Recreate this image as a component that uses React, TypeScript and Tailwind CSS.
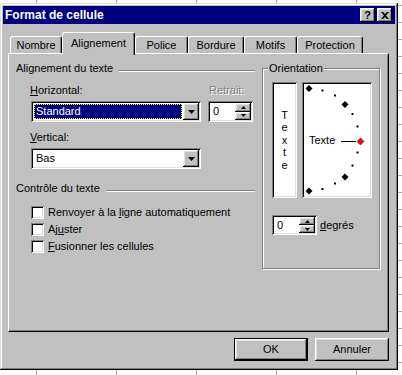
import React from 'react';

const font = "font-['Liberation_Sans',Arial,sans-serif] text-[11px] leading-[13px] text-black";
const raised = 'shadow-[inset_-1px_-1px_0_#000,inset_1px_1px_0_#fff,inset_-2px_-2px_0_#808080,inset_2px_2px_0_#dfdfdf]';
const sunken = 'shadow-[inset_1px_1px_0_#808080,inset_-1px_-1px_0_#fff,inset_2px_2px_0_#000,inset_-2px_-2px_0_#dfdfdf]';
const frame = 'shadow-[inset_-1px_-1px_0_#000,inset_1px_1px_0_#dfdfdf,inset_-2px_-2px_0_#808080,inset_2px_2px_0_#fff]';

// Excel sheet grid behind the dialog
const Sheet = () => {
  const rows = Array.from({ length: 23 });
  const cols = [0, 1, 2, 3, 4, 5];
  return (
    <div className="flex flex-col">
      {rows.map((_, r) => (
        <div key={r} className={`flex shrink-0 ${r === 0 ? 'h-[6px]' : 'h-[17px]'}`}>
          {cols.map((c) => (
            <div
              key={c}
              className={`shrink-0 border-r border-b border-[#a8a8a8] ${c === 0 ? 'w-[37px]' : 'w-[80px]'}`}
            />
          ))}
        </div>
      ))}
    </div>
  );
};

const DownArrow = () => (
  <svg width="7" height="4" viewBox="0 0 7 4">
    <path d="M0 0h7L3.5 4z" fill="#000" />
  </svg>
);

const SpinArrow = ({ up }: { up?: boolean }) => (
  <svg width="5" height="3" viewBox="0 0 5 3">
    <path d={up ? 'M0 3h5L2.5 0z' : 'M0 0h5L2.5 3z'} fill="#000" />
  </svg>
);

const Combo = ({ value, selected }: { value: string; selected?: boolean }) => (
  <div className={`flex h-[21px] w-[170px] bg-white p-[2px] ${sunken}`}>
    <div className="flex flex-1 items-stretch p-[1px]">
      {selected ? (
        <div className="flex flex-1 items-center border border-dotted border-[#ffff00] bg-[#000080] pl-[1px] text-white">
          {value}
        </div>
      ) : (
        <div className="flex flex-1 items-center pl-[2px]">{value}</div>
      )}
    </div>
    <div className={`flex w-[16px] items-center justify-center bg-[#c0c0c0] ${raised}`}>
      <DownArrow />
    </div>
  </div>
);

const Spinner = ({ h }: { h: string }) => (
  <div className={`flex w-[45px] bg-white p-[2px] ${h} ${sunken}`}>
    <div className="flex flex-1 items-center pl-[3px]">0</div>
    <div className="flex w-[16px] flex-col">
      <div className={`flex flex-1 items-center justify-center bg-[#c0c0c0] ${raised}`}>
        <SpinArrow up />
      </div>
      <div className={`flex flex-1 items-center justify-center bg-[#c0c0c0] ${raised}`}>
        <SpinArrow />
      </div>
    </div>
  </div>
);

const GroupHeader = ({ label }: { label: string }) => (
  <div className="flex h-[13px] items-start">
    <span className="whitespace-nowrap">{label}</span>
    <div className="ml-[6px] mt-[8px] h-[2px] flex-1 border-t border-b border-t-[#808080] border-b-white" />
  </div>
);

const Check = ({ children }: { children: React.ReactNode }) => (
  <div className="flex h-[17px] items-center">
    <div className={`h-[13px] w-[13px] shrink-0 bg-white ${sunken}`} />
    <span className="ml-[4px] whitespace-nowrap">{children}</span>
  </div>
);

const tabs = [
  { label: 'Nombre', w: 'w-[52px]' },
  { label: 'Alignement', w: 'w-[73px]', active: true },
  { label: 'Police', w: 'w-[53px]' },
  { label: 'Bordure', w: 'w-[56px]' },
  { label: 'Motifs', w: 'w-[53px]' },
  { label: 'Protection', w: 'w-[66px]' },
];

const Diamond = ({ x, y, fill = '#000' }: { x: number; y: number; fill?: string }) => (
  <path
    d={`M${x} ${y - 3.5}L${x + 3.5} ${y}L${x} ${y + 3.5}L${x - 3.5} ${y}z`}
    fill={fill}
    stroke={fill === '#000' ? 'none' : '#800000'}
    strokeWidth="0.6"
  />
);

const dots: [number, number][] = [
  [20.5, 8.5], [33, 13.5], [50.5, 32], [55.5, 44.5], [55.5, 70.5], [50.5, 83.5], [33, 101.5], [20.5, 107],
];

const OrientationDial = () => (
  <div className={`relative ml-[5px] flex h-[116px] w-[70px] items-center bg-white pl-[7px] ${sunken}`}>
    <svg className="absolute left-0 top-0" width="70" height="116" viewBox="0 0 70 116">
      <Diamond x={7} y={6.5} />
      <Diamond x={43} y={22.5} />
      <Diamond x={43} y={95} />
      <Diamond x={7} y={109} />
      {dots.map(([x, y], i) => (
        <rect key={i} x={x - 1} y={y - 1} width="2" height="2" fill="#000" />
      ))}
      <line x1="39" y1="59.5" x2="54" y2="59.5" stroke="#000" strokeWidth="1" />
      <Diamond x={58.5} y={59.5} fill="#ff0000" />
    </svg>
    <span className="relative mt-[1px]">Texte</span>
  </div>
);

export default function App() {
  return (
    <div className={`relative h-[375px] w-[402px] overflow-hidden bg-white ${font}`}>
      <Sheet />

      {/* Dialog */}
      <div className={`absolute left-0 top-[3px] flex h-[367px] w-[398px] flex-col bg-[#c0c0c0] p-[3px] ${frame}`}>
        {/* Title bar */}
        <div className="flex h-[18px] shrink-0 items-center bg-[#000080] pl-[2px] pr-[3px]">
          <span className="flex-1 text-[12px] font-bold text-white">Format de cellule</span>
          <div className={`flex h-[14px] w-[15px] items-center justify-center bg-[#c0c0c0] text-[11px] font-bold leading-none ${raised}`}>
            ?
          </div>
          <div className={`ml-[2px] flex h-[14px] w-[15px] items-center justify-center bg-[#c0c0c0] ${raised}`}>
            <svg width="8" height="7" viewBox="0 0 8 7">
              <path d="M0 0h2l2 2 2-2h2L5 3.5 8 7H6L4 5 2 7H0l3-3.5z" fill="#000" />
            </svg>
          </div>
        </div>

        {/* Tabs */}
        <div className="relative z-10 mt-[8px] flex h-[21px] shrink-0 items-end pl-[7px]">
          {tabs.map((t) =>
            t.active ? (
              <div
                key={t.label}
                className={`-mb-[2px] flex h-[23px] ${t.w} items-center justify-center rounded-t-[3px] border-l border-t border-r border-white border-r-black bg-[#c0c0c0] pb-[2px] shadow-[inset_-1px_0_0_#808080]`}
              >
                {t.label}
              </div>
            ) : (
              <div
                key={t.label}
                className={`flex h-[17px] ${t.w} items-center justify-center rounded-t-[3px] border-l border-t border-r border-white border-r-black bg-[#c0c0c0] shadow-[inset_-1px_0_0_#808080]`}
              >
                {t.label}
              </div>
            )
          )}
        </div>

        {/* Tab panel */}
        <div className="mx-[5px] flex h-[279px] w-[381px] shrink-0 border border-white border-r-black border-b-black pl-[7px] pt-[8px] shadow-[inset_-1px_-1px_0_#808080]">
          {/* Left column */}
          <div className="flex w-[239px] flex-col">
            <GroupHeader label="Alignement du texte" />
            <div className="ml-[15px] mt-[9px] flex">
              <div className="flex w-[170px] flex-col">
                <span className="-ml-[1px]">
                  <span className="underline">H</span>orizontal:
                </span>
                <div className="mt-[4px]">
                  <Combo value="Standard" selected />
                </div>
                <span className="-ml-[1px] mt-[9px]">
                  <span className="underline">V</span>ertical:
                </span>
                <div className="mt-[4px]">
                  <Combo value="Bas" />
                </div>
              </div>
              <div className="ml-[7px] flex flex-col">
                <span className="pl-[1px] text-[#808080] [text-shadow:1px_1px_0_#fff]">Retrait:</span>
                <div className="mt-[4px]">
                  <Spinner h="h-[21px]" />
                </div>
              </div>
            </div>

            <div className="mt-[13px]">
              <GroupHeader label="Contrôle du texte" />
            </div>
            <div className="ml-[15px] mt-[9px] flex flex-col">
              <Check>
                Renvoyer à la <span className="underline">l</span>igne automatiquement
              </Check>
              <Check>
                Aj<span className="underline">u</span>ster
              </Check>
              <Check>
                <span className="underline">F</span>usionner les cellules
              </Check>
            </div>
          </div>

          {/* Orientation group */}
          <div className="relative ml-[7px] mt-[6px] flex h-[201px] w-[118px] flex-col border border-[#808080] pl-[9px] pt-[13px] shadow-[inset_1px_1px_0_#fff,1px_1px_0_#fff]">
            <span className="absolute -top-[7px] left-[5px] bg-[#c0c0c0] px-[1px]">Orientation</span>
            <div className="flex">
              <div className={`flex h-[116px] w-[25px] flex-col items-center justify-center bg-white leading-[12.5px] ${sunken}`}>
                <span>T</span>
                <span>e</span>
                <span>x</span>
                <span>t</span>
                <span>e</span>
              </div>
              <OrientationDial />
            </div>
            <div className="mt-[17px] flex items-center">
              <Spinner h="h-[20px]" />
              <span className="ml-[3px]">
                <span className="underline">d</span>egrés
              </span>
            </div>
          </div>
        </div>

        {/* Buttons */}
        <div className="mt-[6px] flex shrink-0 justify-end gap-[7px] pr-[6px]">
          <div className="flex h-[23px] w-[74px] border border-black">
            <div className={`flex flex-1 items-center justify-center bg-[#c0c0c0] ${raised}`}>OK</div>
          </div>
          <div className={`flex h-[23px] w-[74px] items-center justify-center bg-[#c0c0c0] ${raised}`}>Annuler</div>
        </div>
      </div>
    </div>
  );
}
